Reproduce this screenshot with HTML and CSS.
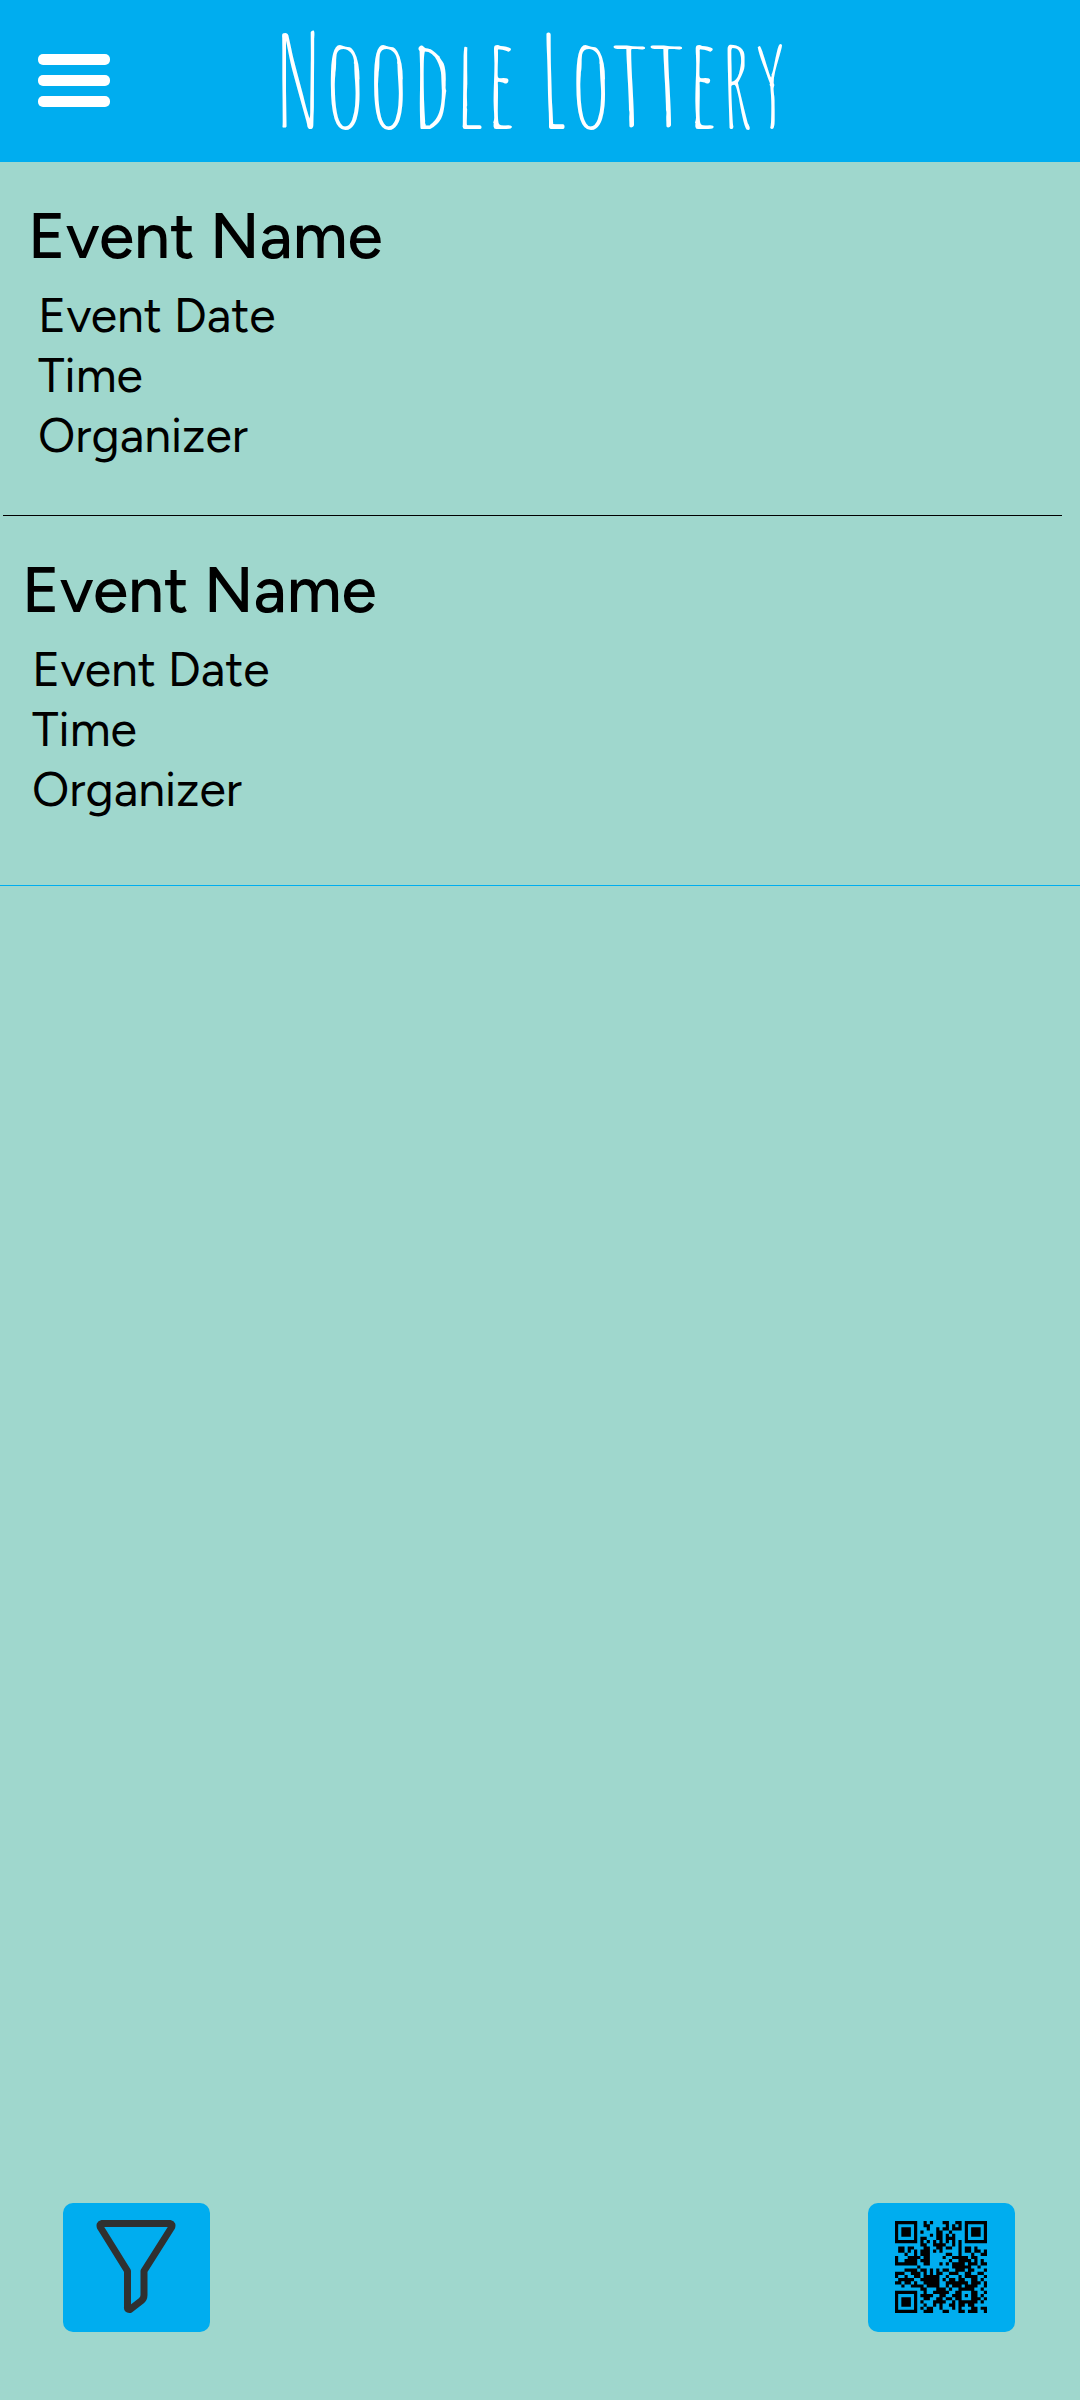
FILE: index.html
```html
<!DOCTYPE html>
<html lang="en">
<head>
<meta charset="utf-8">
<meta name="viewport" content="width=device-width, initial-scale=1">
<title>Noodle Lottery</title>
<link rel="stylesheet" href="styles.css">
</head>
<body>
<header class="bar">
  <button class="menu" type="button" aria-label="Menu"><span></span><span></span><span></span></button>
  <h1 class="brand">Noodle Lottery</h1>
</header>
<main class="events">
  <article class="event">
    <h2 class="name">Event Name</h2>
    <p class="detail">Event Date</p>
    <p class="detail">Time</p>
    <p class="detail">Organizer</p>
  </article>
  <hr class="rule">
  <article class="event event-last">
    <h2 class="name">Event Name</h2>
    <p class="detail">Event Date</p>
    <p class="detail">Time</p>
    <p class="detail">Organizer</p>
  </article>
</main>
<footer class="actions">
  <button class="action" type="button" aria-label="Filter">
    <svg class="filter-icon" viewBox="0 0 80 94" aria-hidden="true"><path d="M6 3.500H74Q77 4 75.500 7.500L48 51V75Q48 79 45 81L34 89.500Q31 90 31.500 87V51L4.500 7.500Q3 4 6 3.500Z" fill="none" stroke="#303030" stroke-width="7" stroke-linejoin="round"/></svg>
  </button>
  <button class="action" type="button" aria-label="Scan QR code">
    <svg class="qr-icon" viewBox="0 0 29 29" aria-hidden="true">
      <path fill="none" stroke="#000" d="M.5 .5h6v6h-6zM22.500 .5h6v6h-6zM.5 22.500h6v6h-6z"/>
      <path d="M2 2h3v3h-3zM24 2h3v3h-3zM2 24h3v3h-3z"/>
      <path fill="none" stroke="#000" transform="translate(0 .5)" d="M9 0h1M11 0h1M15 0h2M19 0h2
        M9 1h2M16 1h1M18 1h1M20 1h1
        M10 2h1M13 2h1M15 2h2M18 2h3
        M8 3h1M13 3h2M17 3h1
        M11 4h1M13 4h2M16 4h1M18 4h1
        M8 5h2M13 5h2M16 5h3
        M8 6h1M10 6h1M12 6h1M14 6h1M16 6h1M18 6h1M20 6h1
        M8 7h2M12 7h4M18 7h1M20 7h1
        M1 8h2M4 8h2M9 8h2M13 8h2M16 8h2M20 8h1M22 8h2M25 8h1
        M1 9h2M4 9h1M6 9h1M8 9h3M12 9h1M14 9h1M20 9h1M22 9h2M25 9h2M28 9h1
        M3 10h1M6 10h1M8 10h3M16 10h2M20 10h1M24 10h1M27 10h2
        M0 11h1M4 11h3M7 11h1M9 11h2M15 11h1M18 11h5M24 11h2
        M0 12h1M3 12h4M8 12h3M17 12h1M20 12h4M25 12h1M27 12h1
        M0 13h7M9 13h2M14 13h1M16 13h1M18 13h4M23 13h3M27 13h2
        M7 14h1M18 14h6M26 14h1
        M3 15h4M8 15h2M11 15h1M13 15h1M15 15h2M19 15h3M23 15h2M28 15h1
        M0 16h3M5 16h3M9 16h1M11 16h1M13 16h2M17 16h3M22 16h2M26 16h2
        M0 17h1M3 17h1M6 17h2M9 17h5M16 17h1M20 17h1M22 17h4M28 17h1
        M1 18h5M8 18h6M15 18h1M17 18h2M20 18h2M24 18h2M27 18h1
        M0 19h2M3 19h2M6 19h1M9 19h5M16 19h7M24 19h3M28 19h1
        M2 20h1M5 20h4M10 20h4M16 20h1M18 20h3M22 20h4M28 20h1
        M8 21h2M13 21h3M17 21h1M20 21h5M27 21h1
        M9 22h1M12 22h5M19 22h2M24 22h2M28 22h1
        M8 23h4M14 23h2M18 23h3M22 23h1M24 23h2M27 23h1
        M9 24h2M13 24h2M16 24h2M19 24h2M24 24h3M28 24h1
        M8 25h1M12 25h4M18 25h1M20 25h6M27 25h1
        M9 26h1M12 26h1M14 26h1M17 26h2M20 26h2M23 26h2
        M8 27h1M10 27h2M14 27h1M18 27h1M20 27h1M24 27h2M27 27h2
        M9 28h3M15 28h2M20 28h2M23 28h3M28 28h1"/>
    </svg>
  </button>
</footer>
</body>
</html>
```

FILE: styles.css
```css
* { box-sizing: border-box; }

body {
  margin: 0;
  min-height: 100vh;
  display: flex;
  flex-direction: column;
  background: #9fd7cd;
  color: #000;
  font-family: "Google Sans", "Product Sans", Figtree, Lato, sans-serif;
}

.bar {
  display: grid;
  grid-template-columns: 1fr auto 1fr;
  align-items: center;
  height: 162px;
  padding: 0 54px 2px 38px;
  background: #00adef;
}

.menu {
  display: flex;
  flex-direction: column;
  gap: 10px;
  width: 72px;
  padding: 0;
  border: 0;
  background: none;
}

.menu span {
  height: 11px;
  border-radius: 5px;
  background: #fff;
}

.brand {
  margin: 0;
  color: #fff;
  font-family: "Amatic SC", "Roboto Condensed", Roboto, sans-serif;
  font-size: 125px;
  font-weight: 400;
  line-height: 160px;
  white-space: nowrap;
}

.event { padding: 34px 28px 50px; }

.event-last {
  padding: 34px 22px 66px;
  border-bottom: 1px solid #00adef;
}

.name {
  margin: 0 0 9px;
  font-size: 64px;
  font-weight: 500;
  line-height: 80px;
}

.detail {
  margin: 0;
  padding-left: 10px;
  font-size: 48px;
  line-height: 60px;
}

.rule {
  height: 1px;
  margin: 0 18px 0 3px;
  border: 0;
  background: #000;
}

.actions {
  display: flex;
  justify-content: space-between;
  margin-top: auto;
  padding: 0 65px 68px 63px;
}

.action {
  display: flex;
  align-items: center;
  justify-content: center;
  width: 147px;
  height: 129px;
  padding: 0 2px 2px 0;
  border: 0;
  border-radius: 10px;
  background: #00adef;
}

.filter-icon { width: 80px; height: 94px; }

.qr-icon { width: 92px; height: 92px; }
```
